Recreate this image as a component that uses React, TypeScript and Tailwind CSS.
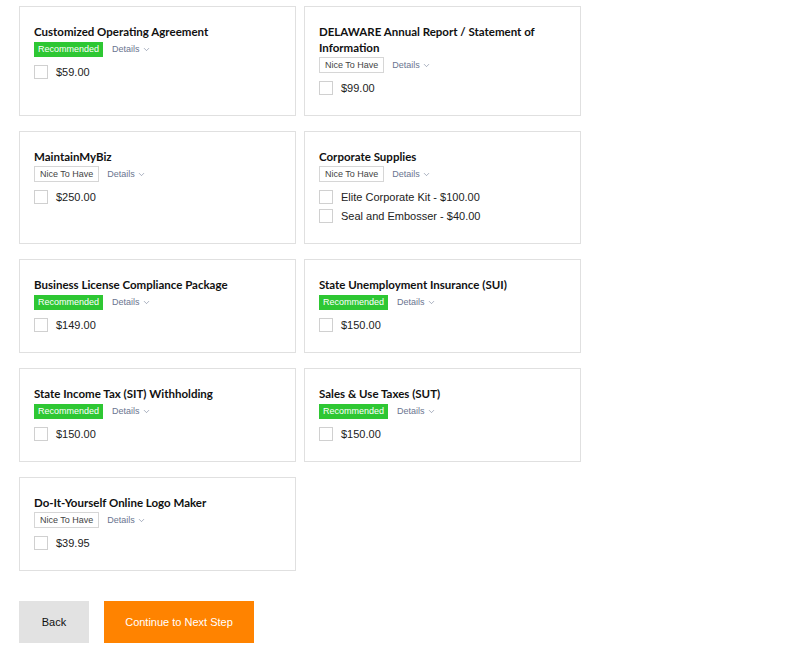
import { ChevronDown } from 'lucide-react';

interface Option {
  label: string;
}

interface Addon {
  title: string;
  tag: 'rec' | 'nice';
  options: Option[];
}

const addons: Addon[] = [
  { title: 'Customized Operating Agreement', tag: 'rec', options: [{ label: '$59.00' }] },
  { title: 'DELAWARE Annual Report / Statement of Information', tag: 'nice', options: [{ label: '$99.00' }] },
  { title: 'MaintainMyBiz', tag: 'nice', options: [{ label: '$250.00' }] },
  {
    title: 'Corporate Supplies',
    tag: 'nice',
    options: [{ label: 'Elite Corporate Kit - $100.00' }, { label: 'Seal and Embosser - $40.00' }],
  },
  { title: 'Business License Compliance Package', tag: 'rec', options: [{ label: '$149.00' }] },
  { title: 'State Unemployment Insurance (SUI)', tag: 'rec', options: [{ label: '$150.00' }] },
  { title: 'State Income Tax (SIT) Withholding', tag: 'rec', options: [{ label: '$150.00' }] },
  { title: 'Sales & Use Taxes (SUT)', tag: 'rec', options: [{ label: '$150.00' }] },
  { title: 'Do-It-Yourself Online Logo Maker', tag: 'nice', options: [{ label: '$39.95' }] },
];

function AddonCard({ a }: { a: Addon }) {
  return (
    <div className="border border-[#e0e0e0] bg-white px-[14px] pt-[17px] pb-[20px]">
      <h3 className="font-['Lato',sans-serif] font-bold text-[11.5px] leading-4 text-[#111] pr-6">
        {a.title}
      </h3>
      <div className="flex items-center gap-[9px] mt-[1px] h-[16px]">
        {a.tag === 'rec' ? (
          <span className="bg-[#2ec733] text-white text-[9px] leading-[15px] px-[4px] h-[15px]">
            Recommended
          </span>
        ) : (
          <span className="border border-[#d6d6d6] text-[#444] text-[9px] leading-[14px] px-[5px] h-[16px] mr-[-1px]">
            Nice To Have
          </span>
        )}
        <span className="flex items-center gap-[2px] text-[9px] leading-[12px] text-[#6a7590]">
          Details
          <ChevronDown className="w-[9px] h-[9px]" strokeWidth={1.5} />
        </span>
      </div>
      <div className="mt-[8px] flex flex-col gap-[5px]">
        {a.options.map((o, i) => (
          <label key={i} className="flex items-center gap-[8px] h-[14px] text-[11px] leading-[14px] text-[#222]">
            <span className="w-[14px] h-[14px] border border-[#d0d0d0] bg-white shrink-0" />
            {o.label}
          </label>
        ))}
      </div>
    </div>
  );
}

export default function App() {
  return (
    <div className="min-h-[659px] bg-white pl-[19px] pt-[6px] font-['Liberation_Sans',Arial,sans-serif]">
      <div className="grid grid-cols-[277px_277px] gap-x-[8px] gap-y-[15px]">
        {addons.map((a, i) => (
          <AddonCard key={i} a={a} />
        ))}
      </div>
      <div className="flex gap-[15px] mt-[30px]">
        <button className="w-[70px] h-[42px] bg-[#e2e2e2] text-[#111] text-[11px]">Back</button>
        <button className="w-[150px] h-[42px] bg-[#ff8300] text-white text-[11px]">Continue to Next Step</button>
      </div>
    </div>
  );
}
